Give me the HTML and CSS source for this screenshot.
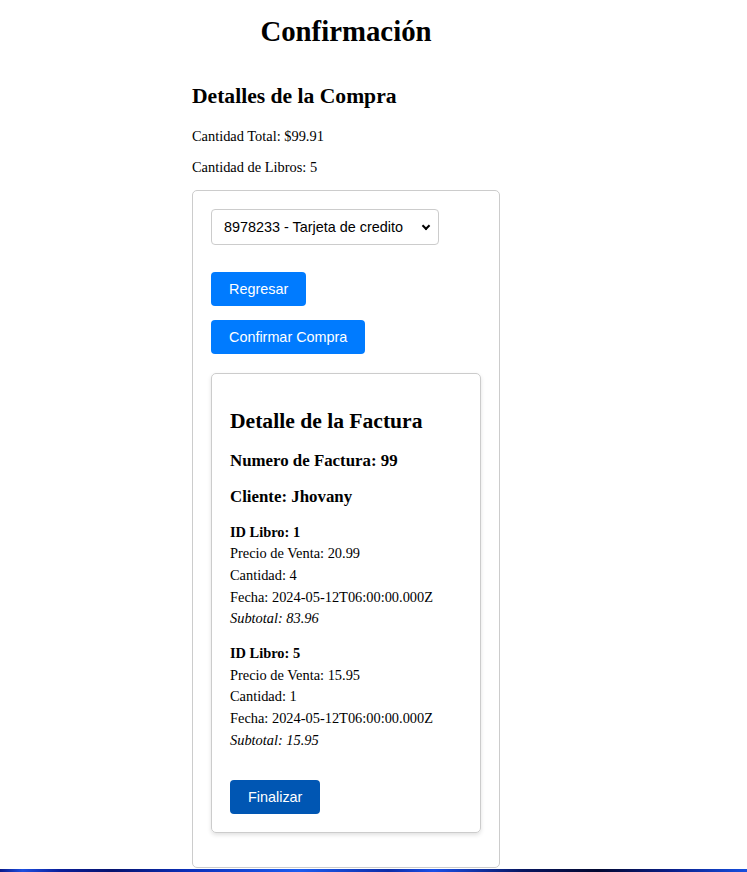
FILE: index.html
```html
<!DOCTYPE html>
<html lang="es">
<head>
<meta charset="utf-8">
<title>Confirmación</title>
<link rel="stylesheet" href="styles.css">
</head>
<body>
<main class="page">
  <h1 class="title">Confirmación</h1>
  <h2 class="section-title">Detalles de la Compra</h2>
  <p class="summary">Cantidad Total: $99.91</p>
  <p class="summary">Cantidad de Libros: 5</p>

  <section class="panel">
    <div class="select-wrap">
      <select class="payment-select">
        <option>8978233 - Tarjeta de credito</option>
      </select>
    </div>

    <div class="actions">
      <button class="btn btn-primary" type="button">Regresar</button>
      <button class="btn btn-primary" type="button">Confirmar Compra</button>
    </div>

    <article class="invoice">
      <h2 class="invoice-title">Detalle de la Factura</h2>
      <h3 class="invoice-meta">Numero de Factura: 99</h3>
      <h3 class="invoice-meta">Cliente: Jhovany</h3>

      <div class="item">
        <div class="item-id">ID Libro: 1</div>
        <div>Precio de Venta: 20.99</div>
        <div>Cantidad: 4</div>
        <div>Fecha: 2024-05-12T06:00:00.000Z</div>
        <div class="item-subtotal">Subtotal: 83.96</div>
      </div>

      <div class="item">
        <div class="item-id">ID Libro: 5</div>
        <div>Precio de Venta: 15.95</div>
        <div>Cantidad: 1</div>
        <div>Fecha: 2024-05-12T06:00:00.000Z</div>
        <div class="item-subtotal">Subtotal: 15.95</div>
      </div>

      <div class="finish">
        <button class="btn btn-dark" type="button">Finalizar</button>
      </div>
    </article>
  </section>
</main>
<div class="desktop-strip"></div>
</body>
</html>
```

FILE: styles.css
```css
html, body {
  margin: 0;
  padding: 0;
  background: #ffffff;
}

body {
  font-family: "Liberation Serif", "Times New Roman", serif;
  font-size: 14.4px;
  color: #000000;
}

.page {
  width: 308px;
  margin-left: 192px;
  padding-top: 15px;
}

.title {
  font-size: 28.8px;
  font-weight: bold;
  text-align: center;
  margin: 0 0 36px;
  line-height: normal;
}

.section-title {
  font-size: 21.6px;
  font-weight: bold;
  margin: 0 0 19px;
}

.summary {
  margin: 0 0 14px;
}

.panel {
  border: 1px solid #cccccc;
  border-radius: 5px;
  padding: 18px;
}

.select-wrap {
  position: relative;
  display: inline-block;
}

.payment-select {
  display: block;
  width: 228px;
  height: 36px;
  padding: 0 24px 0 12px;
  font-family: "Liberation Sans", Arial, sans-serif;
  font-size: 14.4px;
  color: #000000;
  background: #ffffff;
  border: 1px solid #cccccc;
  border-radius: 4px;
  appearance: none;
  -webkit-appearance: none;
}

.select-wrap::after {
  content: "";
  position: absolute;
  right: 10px;
  top: 14px;
  width: 4px;
  height: 4px;
  border-right: 2px solid #000;
  border-bottom: 2px solid #000;
  transform: rotate(45deg);
  pointer-events: none;
}

.actions {
  display: flex;
  flex-direction: column;
  align-items: flex-start;
  gap: 14px;
  margin-top: 27px;
}

.btn {
  font-family: "Liberation Sans", Arial, sans-serif;
  font-size: 14.4px;
  line-height: 16px;
  color: #ffffff;
  border: none;
  border-radius: 4px;
  padding: 9px 18px;
  cursor: pointer;
}

.btn-primary {
  background: #007bff;
}

.btn-dark {
  background: #0056b3;
}

.invoice {
  margin-top: 19px;
  margin-bottom: 16px;
  border: 1px solid #cccccc;
  border-radius: 5px;
  padding: 18px;
  box-shadow: 0 2px 4px rgba(0, 0, 0, 0.12);
}

.invoice-title {
  font-size: 21.6px;
  font-weight: bold;
  margin: 16.5px 0 17.9px;
}

.invoice-meta {
  font-size: 16.85px;
  font-weight: bold;
  margin: 16px 0 14.4px;
}

.item {
  line-height: 1.5;
  margin: 13.4px 0;
}

.item-id {
  font-weight: bold;
}

.item-subtotal {
  font-style: italic;
}

.finish {
  margin-top: 29px;
}

.desktop-strip {
  position: fixed;
  left: 0;
  right: 0;
  bottom: 0;
  height: 3px;
  background: linear-gradient(90deg, #0a1a8a 0%, #1d4fe0 3%, #0a1f9a 8%, #06136e 15%, #0b2fb8 25%, #1c5cf0 40%, #0d2da8 52%, #1a4fe8 58%, #071660 70%, #020830 80%, #0a1f8a 90%, #1650e0 100%);
}
```
